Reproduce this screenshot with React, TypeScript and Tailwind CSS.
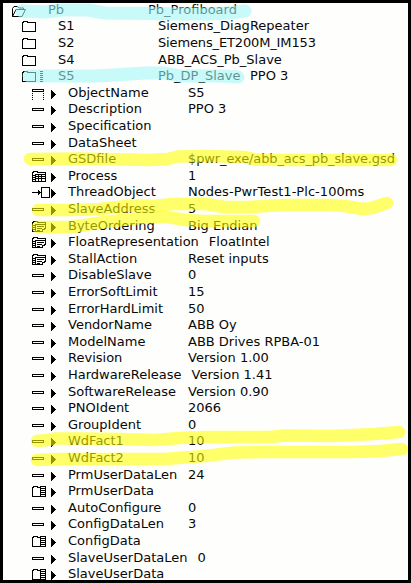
import React from "react";

type IconKind = "dash" | "name" | "process" | "thread" | "enum" | "array";

const ink = "#000";

// Attribute icons share one pixel grid, drawn from column 4 onwards.
function Icon({ kind }: { kind: IconKind }) {
  return (
    <svg width="20" height="14" viewBox="0 0 20 14" fill="none" stroke={ink} strokeWidth="1" shapeRendering="crispEdges" className="shrink-0 overflow-visible">
      {kind === "dash" && <rect x="4.5" y="6.5" width="11" height="2" />}
      {kind === "name" && (
        <>
          <rect x="4.5" y="3.5" width="11" height="2" />
          <path d="M4.5 7v7M15.5 7v7" strokeDasharray="1 1" />
        </>
      )}
      {kind === "thread" && (
        <>
          <path d="M4 7.5h9M13.5 2.5h8v10h-8z" />
          <path d="M10 5h1v1h1v1h1v1h-1v1h-1v1h-1z" fill={ink} stroke="none" />
        </>
      )}
      {kind === "array" && (
        <>
          <path d="M12 12.5H4.5v-9h1v-1h4v1h2.5M12.5 2v11M17.5 2v11" />
          <path d="M12 2.5h6M12 4.5h6M12 6.5h6M12 8.5h6M12 10.5h6M12 12.5h6" />
        </>
      )}
      {(kind === "enum" || kind === "process") && (
        <path d="M7 12.5H4.5v-9h1v-1h4v1h8v2M5 6.5h2M5 8.5h2M5 10.5h2" />
      )}
      {kind === "enum" && (
        <>
          <path d="M7.5 5.5h10v4h-1v1h-2v2h-7z" />
          <path d="M9 7.5h7M9 9.5h5M9 11.5h3" />
        </>
      )}
      {kind === "process" && (
        <path d="M7.5 5.5h10v7h-10zM8 7.5h9M8 9.5h9M10.5 6v6M13.5 6v6" />
      )}
    </svg>
  );
}

function Folder({ open, bars }: { open?: boolean; bars?: boolean }) {
  return (
    <svg width="24" height="15" viewBox="0 0 24 15" fill="none" stroke={ink} strokeWidth="1" className="shrink-0">
      {open ? (
        <path d="M.5 14.5V6.5L2 4.5h3.5L7 6h4.5v2M.5 14.5l3.5-7h9.5l-3.5 7z" />
      ) : (
        <path shapeRendering="crispEdges" d="M.5 12.5v-9h1v-1h4v1h8v9z" />
      )}
      {bars && <path shapeRendering="crispEdges" d="M18 2.5h3M18 4.5h3M18 6.5h3M18 8.5h3M18 10.5h3M18 12.5h3" />}
    </svg>
  );
}

function Arrow() {
  return (
    <svg width="5" height="14" viewBox="0 0 5 14" className="shrink-0" shapeRendering="crispEdges">
      <path d="M0 4h1v1h1v1h1v1h1v1h1v1h-1v1h-1v1h-1v1h-1v1h-1z" fill={ink} />
    </svg>
  );
}

const nodes = [
  { name: "S1", cls: "Siemens_DiagRepeater", h: "h-[17px]", track: "" },
  { name: "S2", cls: "Siemens_ET200M_IM153", h: "h-[17px]", track: "tracking-[-0.14px]" },
  { name: "S4", cls: "ABB_ACS_Pb_Slave", h: "h-4", track: "" },
  { name: "S5", cls: "Pb_DP_Slave", note: "PPO 3", h: "h-[17px]", track: "" },
];

const S = "h-4";
const T = "h-[17px]";

const attributes: [IconKind, string, string, string][] = [
  ["name", "ObjectName", "S5", S],
  ["dash", "Description", "PPO 3", T],
  ["dash", "Specification", "", T],
  ["dash", "DataSheet", "", S],
  ["dash", "GSDfile", "$pwr_exe/abb_acs_pb_slave.gsd", T],
  ["process", "Process", "1", S],
  ["thread", "ThreadObject", "Nodes-PwrTest1-Plc-100ms", T],
  ["dash", "SlaveAddress", "5", T],
  ["enum", "ByteOrdering", "Big Endian", S],
  ["enum", "FloatRepresentation", "FloatIntel", T],
  ["enum", "StallAction", "Reset inputs", S],
  ["dash", "DisableSlave", "0", T],
  ["dash", "ErrorSoftLimit", "15", T],
  ["dash", "ErrorHardLimit", "50", S],
  ["dash", "VendorName", "ABB Oy", T],
  ["dash", "ModelName", "ABB Drives RPBA-01", S],
  ["dash", "Revision", "Version 1.00", T],
  ["dash", "HardwareRelease", "Version 1.41", T],
  ["dash", "SoftwareRelease", "Version 0.90", S],
  ["dash", "PNOIdent", "2066", T],
  ["dash", "GroupIdent", "0", S],
  ["dash", "WdFact1", "10", T],
  ["dash", "WdFact2", "10", T],
  ["dash", "PrmUserDataLen", "24", S],
  ["array", "PrmUserData", "", T],
  ["dash", "AutoConfigure", "0", S],
  ["dash", "ConfigDataLen", "3", T],
  ["array", "ConfigData", "", T],
  ["dash", "SlaveUserDataLen", "0", S],
  ["array", "SlaveUserData", "", T],
];

const valueTracking: Record<string, string> = {
  GSDfile: "tracking-[-0.12px]",
  ThreadObject: "tracking-[0.04px]",
};

// Translucent marker strokes laid over the rows.
function Highlights() {
  return (
    <svg className="pointer-events-none absolute -left-[3px] -top-[3px]" width="411" height="583" viewBox="0 0 411 583" fill="none" strokeLinecap="round" strokeLinejoin="round" strokeWidth="13">
      <g stroke="#9ef6f6" strokeOpacity="0.58">
        <path d="M22 11L45 12L62 10L88 10L105 13L150 13.5L175 14L205 14L228 13L245 11" />
        <path d="M29 76L95 76L130 74L145 73L165 73L180 76L205 76L222 76L238 77" />
      </g>
      <g stroke="#ffff00" strokeOpacity="0.58" strokeWidth="12.5">
        <path d="M30 159L80 158.5L150 160L168 159L178 156.5L205 156L245 157L255 159.5L280 160H391" />
        <path d="M38 210L75 210L100 209L130 205.5L155 206L172 204L205 204L225 207L248 207L285 205H330L345 206L362 209L372 208L387 203" />
        <path d="M38 227L72 227L98 223L130 219L152 217L168 217L185 220L205 221H254" />
        <path d="M37 441L47 440L56 438.5H80L120 439L155 440L180 438L205 437L270 437L285 435.5L330 436L375 434L399 432" />
        <path d="M37 460L60 459L165 459L205 456L235 452.5L265 452L355 452L380 451L402 449" />
      </g>
    </svg>
  );
}

export default function App() {
  return (
    <div className="relative h-[583px] w-[411px] overflow-hidden border-[3px] border-black bg-[#fefefc] font-['DejaVu_Sans',sans-serif] text-[13px] leading-[14px] text-[#080808]">
      <div className="-mt-px flex flex-col whitespace-pre">
        <div className="flex h-[17px] shrink-0 pl-[9px]">
          <Folder open />
          <span className="ml-3 w-[100px] shrink-0 leading-4">Pb</span>
          <span className="leading-4">Pb_Profiboard</span>
        </div>
        {nodes.map((n) => (
          <div key={n.name} className={`flex shrink-0 pl-[19px] ${n.h}`}>
            <Folder bars={n.name === "S5"} />
            <span className="ml-3 w-[100px] shrink-0">{n.name}</span>
            <span className={`w-[92px] ${n.track}`}>{n.cls}</span>
            {n.note && <span>{n.note}</span>}
          </div>
        ))}
        {attributes.map(([icon, name, value, h]) => (
          <div key={name} className={`flex shrink-0 pl-[25px] ${h}`}>
            <Icon kind={icon} />
            <span className="ml-[3px] flex">
              <Arrow />
            </span>
            <span className="ml-3 min-w-[120px] pr-2.5">{name}</span>
            <span className={valueTracking[name] ?? ""}>{value}</span>
          </div>
        ))}
      </div>
      <Highlights />
    </div>
  );
}
